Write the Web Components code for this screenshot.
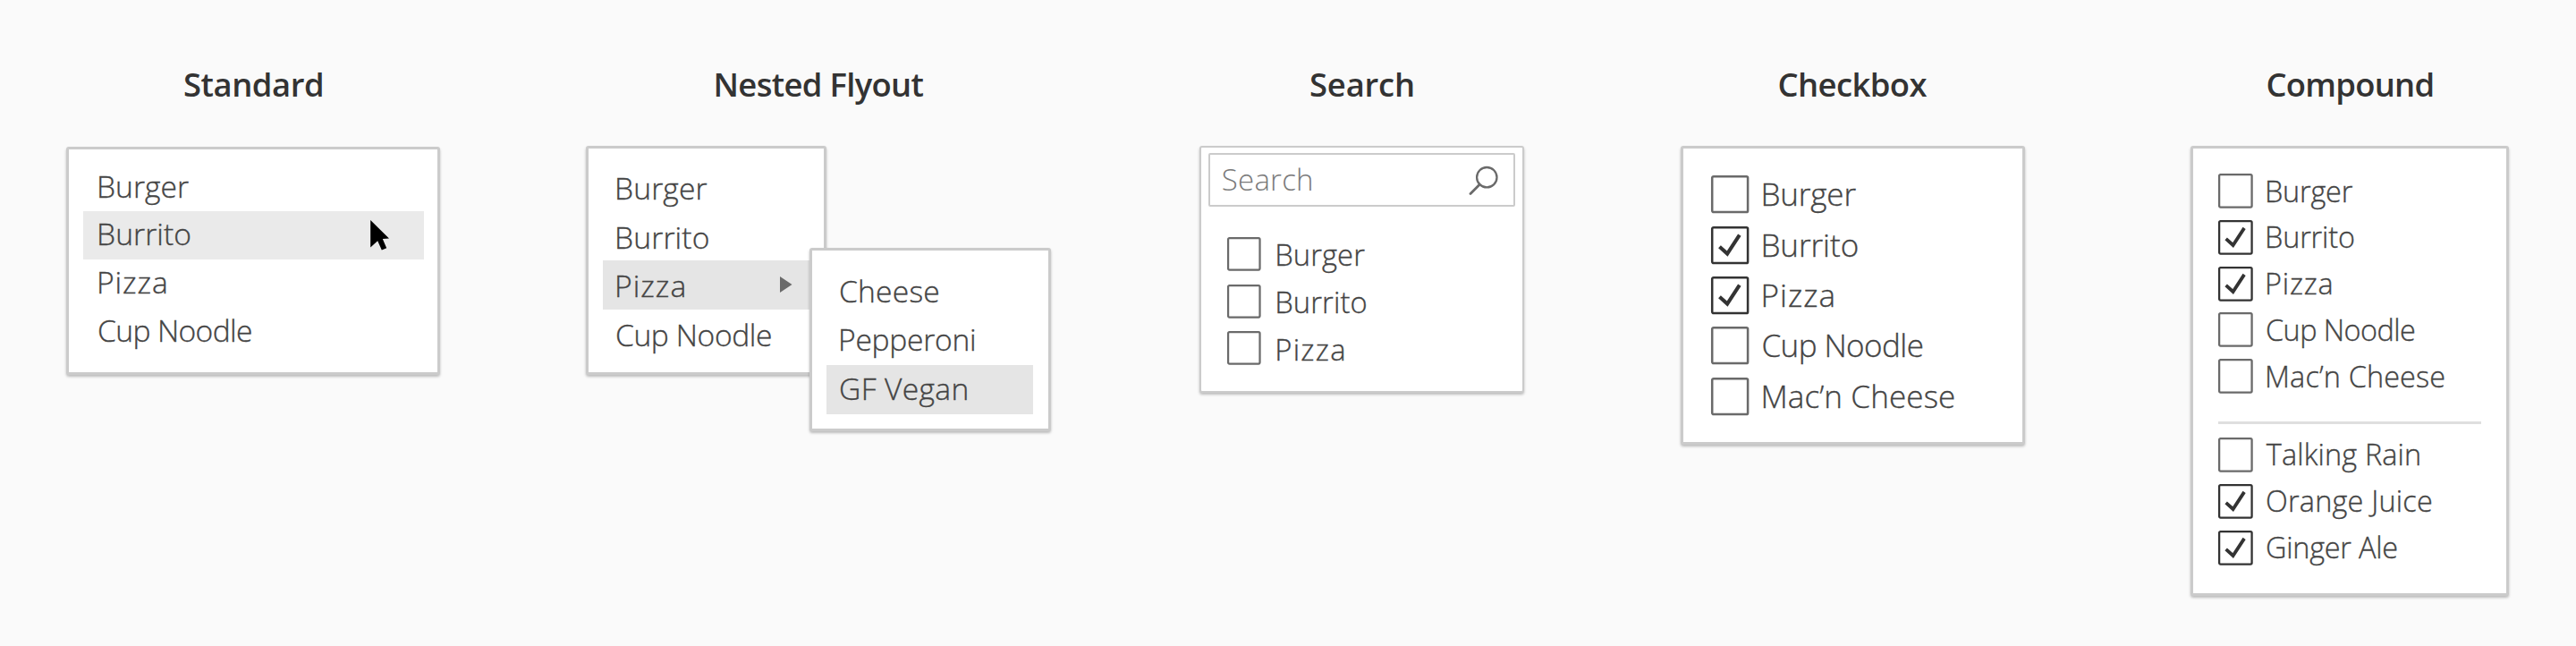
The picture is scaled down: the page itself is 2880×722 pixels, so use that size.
<!DOCTYPE html>
<html lang="en">
<head>
<meta charset="utf-8">
<title>Dropdown menu types</title>
<style>
html, body { margin: 0; height: 722px; overflow: hidden; background: #fafafa; }
body { font-family: "Open Sans", "Noto Sans", sans-serif; font-weight: 300; color: #333; }
</style>
</head>
<body>
<menu-gallery>
  <menu-example heading="Standard" hw="154" style="margin-left:74px;width:418px">
    <menu-panel style="margin-top:1px;width:418px;height:255px;padding:15.4px 14.6px 0 16px;--row:53.6px;--size:33.6px;--pad:18px;--drop:-2.6px;--hover:#eaeaea">
      <menu-row label="Burger" w="100"></menu-row>
      <menu-row label="Burrito" w="101.3" active><menu-cursor></menu-cursor></menu-row>
      <menu-row label="Pizza" w="75"></menu-row>
      <menu-row label="Cup Noodle" w="170"></menu-row>
    </menu-panel>
  </menu-example>
  <menu-example heading="Nested Flyout" hw="232" style="margin-left:163px;width:520px;--nudge:3px">
    <menu-panel style="width:269px;height:256px;padding:16.4px 0 0 16px;--row:54.4px;--size:33.6px;--pad:16px;--drop:1.6px;--hover:#e5e5e5">
      <menu-row label="Burger" w="100.5"></menu-row>
      <menu-row label="Burrito" w="101.7"></menu-row>
      <menu-row label="Pizza" w="75.4" active><menu-arrow></menu-arrow></menu-row>
      <menu-row label="Cup Noodle" w="172"></menu-row>
    </menu-panel>
    <menu-panel flyout style="width:270px;height:205px;padding:18.9px 16.7px 0 16px;--row:54.6px;--size:33.6px;--pad:16px;--drop:-3.2px;--hover:#e5e5e5">
      <menu-row label="Cheese" w="109.3"></menu-row>
      <menu-row label="Pepperoni" w="150"></menu-row>
      <menu-row label="GF Vegan" w="141.4" active></menu-row>
    </menu-panel>
  </menu-example>
  <menu-example heading="Search" hw="115" style="margin-left:166px;width:363px">
    <menu-panel style="--edge:2px;width:363px;height:276px;padding:6px 8.5px 0 8px;--row:52.8px;--size:32.7px;--pad:21.3px;--drop:3px;--box:37.6px;--gap:18.3px">
      <menu-search></menu-search>
      <menu-row check label="Burger" w="98"></menu-row>
      <menu-row check label="Burrito" w="99.3"></menu-row>
      <menu-row check label="Pizza" w="74"></menu-row>
    </menu-panel>
  </menu-example>
  <menu-example heading="Checkbox" hw="165" style="margin-left:175px;width:385px;--nudge:1px">
    <menu-panel style="width:385px;height:334px;padding:23.3px 0 0 0;--row:56.33px;--size:35px;--pad:30.7px;--drop:-.2px;--box:42.3px;--gap:16.4px">
      <menu-row check label="Burger" w="104"></menu-row>
      <menu-row check="on" label="Burrito" w="105.3"></menu-row>
      <menu-row check="on" label="Pizza" w="78"></menu-row>
      <menu-row check label="Cup Noodle" w="178.3"></menu-row>
      <menu-row check label="Mac’n Cheese" w="213.7"></menu-row>
    </menu-panel>
  </menu-example>
  <menu-example heading="Compound" hw="184" style="margin-left:185px;width:356px;--nudge:1px">
    <menu-panel style="width:356px;height:503px;padding:21.5px 0 0 0;--row:51.8px;--size:32.4px;--pad:28.3px;--drop:-1.6px;--box:38.7px;--gap:16px">
      <menu-row check label="Burger" w="95.7"></menu-row>
      <menu-row check="on" label="Burrito" w="97"></menu-row>
      <menu-row check="on" label="Pizza" w="71.5"></menu-row>
      <menu-row check label="Cup Noodle" w="164"></menu-row>
      <menu-row check label="Mac’n Cheese" w="197.3"></menu-row>
      <menu-divider></menu-divider>
      <menu-row check label="Talking Rain" w="171.3" style="--gap:14.8px"></menu-row>
      <menu-row check="on" label="Orange Juice" w="183"></menu-row>
      <menu-row check="on" label="Ginger Ale" w="144.3"></menu-row>
    </menu-panel>
  </menu-example>
</menu-gallery>

<script>
const pen = document.createElement('canvas').getContext('2d');
const define = (name, render, after) => customElements.define(name, class extends HTMLElement {
  connectedCallback() {
    if (this.shadowRoot) return;
    const root = this.attachShadow({ mode: 'open' });
    root.innerHTML = render(this);
    if (after) after(this, root);
  }
});

// A single line of text tracked so that its glyphs span the width in "w".
define('fit-text', el => `<style>
  :host { display: block; flex: none; white-space: nowrap; }
  span { display: block; }
</style><span>${el.getAttribute('text')}</span>`, (el, root) => {
  const cs = getComputedStyle(el), text = el.getAttribute('text'), w = +el.getAttribute('w');
  pen.font = `${cs.fontWeight} ${cs.fontSize} ${cs.fontFamily}`;
  const m = pen.measureText(text);
  const ink = m.actualBoundingBoxLeft + m.actualBoundingBoxRight;
  const span = root.querySelector('span');
  span.style.letterSpacing = `${(w - ink) / (text.length - 1)}px`;
  span.style.marginLeft = `${m.actualBoundingBoxLeft}px`;
  el.style.width = `${w}px`;
});

define('menu-gallery', () => `<style>
  :host { display: flex; align-items: flex-start; width: 2880px; height: 722px; }
</style><slot></slot>`);

define('menu-example', el => `<style>
  :host { display: block; position: relative; flex: none; }
  h2 { margin: 0; height: 98px; padding: 65px 0 0 var(--nudge, 0); display: flex; justify-content: center;
       font-size: 36.4px; line-height: 58px; font-weight: 600; color: #333; }
</style><h2><fit-text text="${el.getAttribute('heading')}" w="${el.getAttribute('hw')}"></fit-text></h2><slot></slot>`);

define('menu-panel', () => `<style>
  :host { display: block; box-sizing: border-box; border: var(--edge, 3px) solid #cbcbcb; border-radius: 3px;
          background: #fff; box-shadow: 0 2px 3px rgba(0,0,0,.25); }
  :host([flyout]) { position: absolute; left: 250px; top: 277px; }
</style><slot></slot>`);

define('menu-row', el => `<style>
  :host { display: flex; align-items: center; box-sizing: border-box; height: var(--row);
          padding-left: var(--pad); font-size: var(--size); line-height: 44px; color: #444; }
  :host([active]) { background: var(--hover); }
  check-box { margin-right: var(--gap); }
  fit-text { margin-top: var(--drop); -webkit-text-stroke: .35px #444; }
  slot { display: block; }
</style>${el.hasAttribute('check') ? `<check-box state="${el.getAttribute('check')}"></check-box>` : ''}
<fit-text text="${el.getAttribute('label')}" w="${el.getAttribute('w')}"></fit-text><slot></slot>`);

define('check-box', el => {
  const on = el.getAttribute('state') === 'on';
  return `<style>
  :host { display: block; flex: none; width: var(--box); height: var(--box); }
  svg { display: block; width: 100%; height: 100%; overflow: visible; }
</style><svg viewBox="0 0 42 42" fill="none" stroke="${on ? '#333' : '#6a6a6a'}">
  <rect x="1.2" y="1.2" width="39.6" height="39.6" rx="1.6" stroke-width="2.5"/>
  ${on ? '<path d="M9.4 22.6 L18 30.4 L31.6 9.6" stroke-width="4.1"/>' : ''}</svg>`;
});

define('menu-search', () => `<style>
  :host { display: flex; align-items: center; justify-content: space-between; box-sizing: border-box;
          height: 60px; margin-bottom: 26.3px; padding: 0 16.5px 0 13.8px; border: 2px solid #cbcbcb;
          border-radius: 2px; font-size: 33px; line-height: 44px; color: #7a7a7a; }
  svg { display: block; }
</style><fit-text text="Search" w="99.3"></fit-text>
<svg width="33" height="33" viewBox="0 0 33 33" fill="none" stroke="#6a6a6a">
  <circle cx="20.3" cy="13.2" r="11.2" stroke-width="2.3"/><path d="M12.2 21.2 L2 31.4" stroke-width="2.8" stroke-linecap="round"/>
</svg>`);

define('menu-divider', () => `<style>
  :host { display: block; height: 3px; margin: 24.2px 28.3px 8.7px 28px; background: #dfdfdf; }
</style>`);

define('menu-arrow', () => `<style>
  :host { display: block; margin-left: 106.8px; }
  svg { display: block; }
</style><svg width="13.5" height="18" viewBox="0 0 13 18" preserveAspectRatio="none"><path d="M0 0 L13 9 L0 18 Z" fill="#6a6a6a"/></svg>`);

define('menu-cursor', () => `<style>
  :host { display: block; margin-left: 201.8px; }
  svg { display: block; }
</style><svg width="22" height="34" viewBox="0 0 22 34"><path d="M.2 0 L21 20.6 L13.8 20.9 L18.2 31.3 L12.8 33.5 L8.2 23.2 L.2 30.6 Z" fill="#000"/></svg>`);
</script>
</body>
</html>
